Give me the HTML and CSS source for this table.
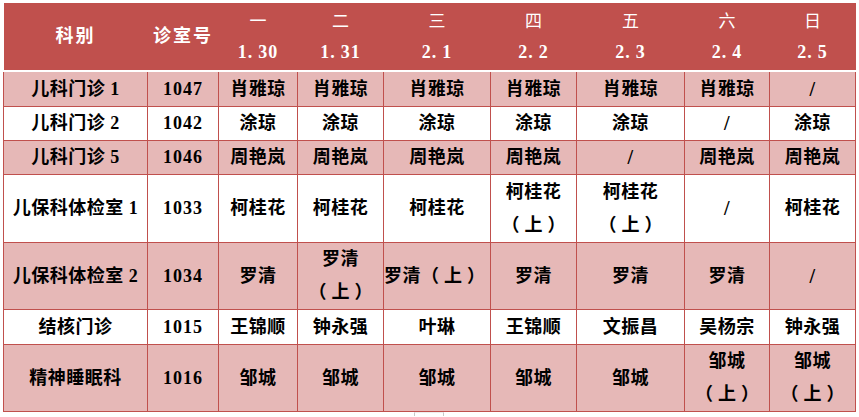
FILE: index.html
```
<!DOCTYPE html>
<html lang="zh-CN">
<head>
<meta charset="utf-8">
<title>门诊排班表</title>
<link rel="stylesheet" href="styles.css">
</head>
<body>
<table class="roster">
  <colgroup>
    <col class="c-dept"><col class="c-room"><col class="c-d1"><col class="c-d2"><col class="c-d3"><col class="c-d4"><col class="c-d5"><col class="c-d6"><col class="c-d7">
  </colgroup>
  <thead>
    <tr class="head">
      <th class="ttl">科别</th>
      <th class="ttl">诊室号</th>
      <th><span class="day">一</span><br><span class="date">1<span class="dot">.</span>30</span></th>
      <th><span class="day">二</span><br><span class="date">1<span class="dot">.</span>31</span></th>
      <th><span class="day">三</span><br><span class="date">2<span class="dot">.</span>1</span></th>
      <th><span class="day">四</span><br><span class="date">2<span class="dot">.</span>2</span></th>
      <th><span class="day">五</span><br><span class="date">2<span class="dot">.</span>3</span></th>
      <th><span class="day">六</span><br><span class="date">2<span class="dot">.</span>4</span></th>
      <th><span class="day">日</span><br><span class="date">2<span class="dot">.</span>5</span></th>
    </tr>
  </thead>
  <tbody>
    <tr class="pink h1">
      <td>儿科门诊 1</td><td class="num">1047</td><td>肖雅琼</td><td>肖雅琼</td><td>肖雅琼</td><td>肖雅琼</td><td>肖雅琼</td><td>肖雅琼</td><td class="none">/</td>
    </tr>
    <tr class="white h2">
      <td>儿科门诊 2</td><td class="num">1042</td><td>涂琼</td><td>涂琼</td><td>涂琼</td><td>涂琼</td><td>涂琼</td><td class="none">/</td><td>涂琼</td>
    </tr>
    <tr class="pink h2">
      <td>儿科门诊 5</td><td class="num">1046</td><td>周艳岚</td><td>周艳岚</td><td>周艳岚</td><td>周艳岚</td><td class="none">/</td><td>周艳岚</td><td>周艳岚</td>
    </tr>
    <tr class="white h4">
      <td>儿保科体检室 1</td><td class="num">1033</td><td>柯桂花</td><td>柯桂花</td><td>柯桂花</td><td>柯桂花<br><span class="am">（上）</span></td><td>柯桂花<br><span class="am">（上）</span></td><td class="none">/</td><td>柯桂花</td>
    </tr>
    <tr class="pink h5">
      <td>儿保科体检室 2</td><td class="num">1034</td><td>罗清</td><td>罗清<br><span class="am">（上）</span></td><td>罗清<span class="am inl">（上）</span></td><td>罗清</td><td>罗清</td><td>罗清</td><td class="none">/</td>
    </tr>
    <tr class="white h1">
      <td>结核门诊</td><td class="num">1015</td><td>王锦顺</td><td>钟永强</td><td>叶琳</td><td>王锦顺</td><td>文振昌</td><td>吴杨宗</td><td>钟永强</td>
    </tr>
    <tr class="pink h5">
      <td>精神睡眠科</td><td class="num">1016</td><td>邹城</td><td>邹城</td><td>邹城</td><td>邹城</td><td>邹城</td><td>邹城<br><span class="am">（上）</span></td><td>邹城<br><span class="am">（上）</span></td>
    </tr>
  </tbody>
</table>
<div class="mark"></div>
</body>
</html>
```

FILE: styles.css
```
html, body {
  margin: 0;
  padding: 0;
  background: #ffffff;
}
body {
  padding: 3px 0 0 3px;
  font-family: "Liberation Serif", "Noto Sans CJK SC", serif;
  color: #000;
}
.roster {
  border-collapse: collapse;
  table-layout: fixed;
  width: 853px;
}
.c-dept { width: 144px; }
.c-room { width: 71px; }
.c-d1 { width: 79px; }
.c-d2 { width: 86px; }
.c-d3 { width: 107px; }
.c-d4 { width: 86px; }
.c-d5 { width: 108px; }
.c-d6 { width: 85px; }
.c-d7 { width: 86px; }

.head th {
  background: #c0504d;
  color: #ffffff;
  height: 67px;
  padding: 0;
  border: 0;
  border-bottom: 2px solid #ffffff;
  text-align: center;
  vertical-align: middle;
  font-size: 18px;
  line-height: 31px;
  font-weight: bold;
}
.head th.ttl {
  letter-spacing: 2px;
}
.day {
  font-weight: normal;
  font-size: 17px;
}
.date {
  font-weight: bold;
  letter-spacing: 1px;
}
.dot {
  letter-spacing: 6px;
}

.roster td {
  border: 1px solid #c0504d;
  padding: 0;
  text-align: center;
  vertical-align: middle;
  font-size: 18px;
  line-height: 33px;
  font-weight: bold;
  white-space: nowrap;
  letter-spacing: 0.5px;
}
.roster td.num {
  letter-spacing: 1px;
}
.roster td.none {
  font-size: 20px;
}
.pink td { background: #e6b8b7; }
.white td { background: #ffffff; }

.h1 td { height: 34px; }
.h2 td { height: 33px; }
.h4 td { height: 67px; }
.h5 td { height: 66px; }

.am {
  letter-spacing: 5px;
  padding-left: 5px;
}
.am.inl {
  padding-left: 0;
}
.mark {
  width: 28px;
  height: 3px;
  margin-left: 411px;
  border-left: 1px solid #c8c8c8;
  border-right: 1px solid #c8c8c8;
  border-top: 1px solid #eeeeee;
}
```
